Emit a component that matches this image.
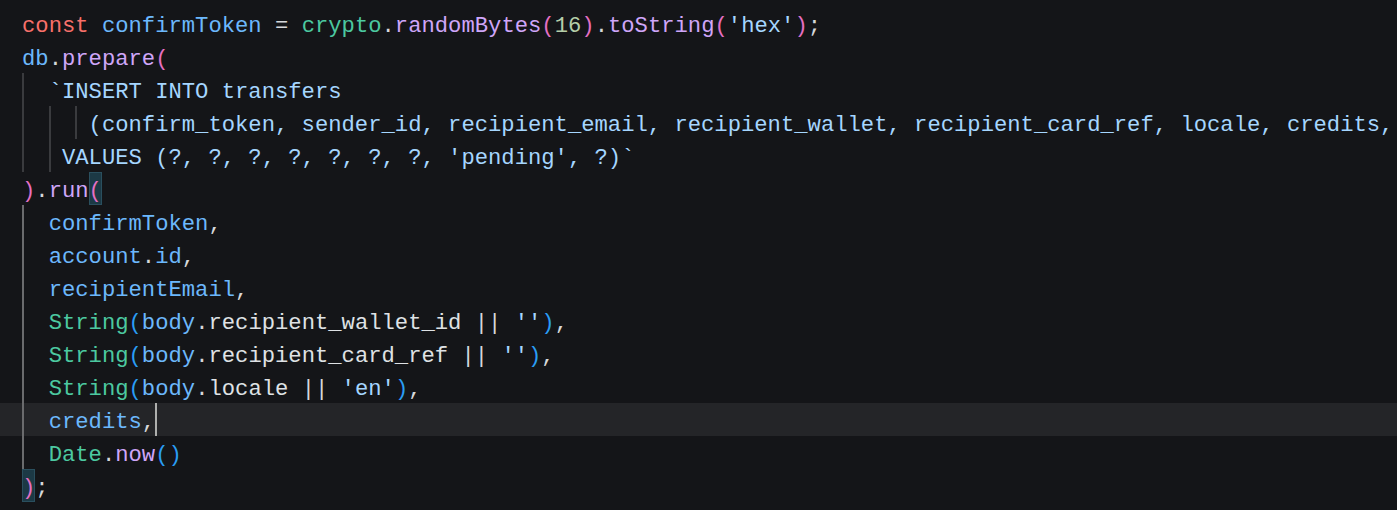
import React from "react";

// token colours, written out in full so Tailwind picks them up
const KW = "text-[#f8706a]";
const VAR = "text-[#6cb8fc]";
const CLS = "text-[#4cc9a0]";
const FN = "text-[#cfa6f9]";
const NUM = "text-[#b5cea8]";
const STR = "text-[#a5d6ff]";
const PUN = "text-[#d6d8da]";
const PROP = "text-[#dfe2e5]";
const B1 = "text-[#e56fc3]";
const B2 = "text-[#2a9df4]";

// x offsets of character columns (22px gutter, 13.33px per char)
const COL = {
  0: "left-[22px]",
  2: "left-[49px]",
  4: "left-[75px]",
  5: "left-[89px]",
  10: "left-[155px]",
};

const lines = [
  { toks: [[KW, "const"], [PUN, " "], [VAR, "confirmToken"], [PUN, " = "], [CLS, "crypto"], [PUN, "."], [FN, "randomBytes"], [B1, "("], [NUM, "16"], [B1, ")"], [PUN, "."], [FN, "toString"], [B1, "("], [STR, "'hex'"], [B1, ")"], [PUN, ";"]] },
  { toks: [[VAR, "db"], [PUN, "."], [FN, "prepare"], [B1, "("]] },
  { toks: [[STR, "  `INSERT INTO transfers"]], guides: [0] },
  { toks: [[STR, "     (confirm_token, sender_id, recipient_email, recipient_wallet, recipient_card_ref, locale, credits,"]], guides: [0, 2, 4] },
  { toks: [[STR, "   VALUES (?, ?, ?, ?, ?, ?, ?, 'pending', ?)`"]], guides: [0, 2] },
  { toks: [[B1, ")"], [PUN, "."], [FN, "run"], [B1, "("]], box: 5 },
  { toks: [[PUN, "  "], [VAR, "confirmToken"], [PUN, ","]], active: true },
  { toks: [[PUN, "  "], [VAR, "account"], [PUN, "."], [VAR, "id"], [PUN, ","]], active: true },
  { toks: [[PUN, "  "], [VAR, "recipientEmail"], [PUN, ","]], active: true },
  { toks: [[PUN, "  "], [CLS, "String"], [B2, "("], [VAR, "body"], [PUN, "."], [PROP, "recipient_wallet_id"], [PUN, " || "], [STR, "''"], [B2, ")"], [PUN, ","]], active: true },
  { toks: [[PUN, "  "], [CLS, "String"], [B2, "("], [VAR, "body"], [PUN, "."], [PROP, "recipient_card_ref"], [PUN, " || "], [STR, "''"], [B2, ")"], [PUN, ","]], active: true },
  { toks: [[PUN, "  "], [CLS, "String"], [B2, "("], [VAR, "body"], [PUN, "."], [PROP, "locale"], [PUN, " || "], [STR, "'en'"], [B2, ")"], [PUN, ","]], active: true },
  { toks: [[PUN, "  "], [VAR, "credits"], [PUN, ","]], active: true, current: true, cursor: 10 },
  { toks: [[PUN, "  "], [CLS, "Date"], [PUN, "."], [FN, "now"], [B2, "()"]], active: true },
  { toks: [[B1, ")"], [PUN, ";"]], box: 0 },
];

const CodeLine = ({ line }) => (
  <div
    className={
      "relative h-[33px] pt-[3px] pl-[22px] leading-[33px] whitespace-pre " +
      (line.current ? "bg-[#242528]" : "")
    }
  >
    {/* bracket match box */}
    {line.box !== undefined && (
      <div className={"absolute top-0 h-[33px] w-[13px] bg-[#1c3945] border border-[#2a4f5e] " + COL[line.box]} />
    )}
    {/* indent guides */}
    {(line.guides || []).map((g) => (
      <div key={g} className={"absolute top-0 h-[33px] w-[2px] bg-[#3a3b3e] " + COL[g]} />
    ))}
    {line.active && (
      <div className="absolute top-0 left-[22px] h-[33px] w-[2px] bg-[#6a6b6d]" />
    )}
    <span className="relative">
      {line.toks.map(([c, t], i) => (
        <span key={i} className={c}>
          {t}
        </span>
      ))}
    </span>
    {line.cursor !== undefined && (
      <div className={"absolute top-0 h-[33px] w-[2px] bg-[#aeafad] " + COL[line.cursor]} />
    )}
  </div>
);

export default function App() {
  return (
    <div className="w-[1397px] h-[510px] overflow-hidden bg-[#141518] pt-[7px] text-[22.2px] font-['Liberation_Mono',monospace]">
      {lines.map((l, i) => (
        <CodeLine key={i} line={l} />
      ))}
    </div>
  );
}
